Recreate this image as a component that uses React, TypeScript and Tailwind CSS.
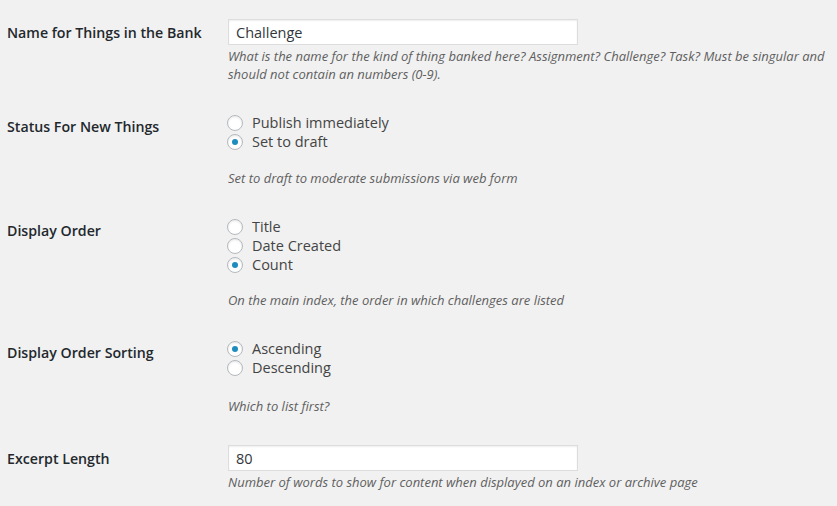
// WordPress-style settings table for the Bank plugin: text fields,
// radio groups and italic helper descriptions on the admin grey.

import { useState } from 'react'

type Option = { value: string; label: string }

function Radio({ checked, label, onChange }: { checked: boolean; label: string; onChange: () => void }) {
  return (
    <label className="flex items-center h-[19px] cursor-pointer" onClick={onChange}>
      <span className="w-4 h-4 rounded-full border border-[#b4b9be] bg-white shadow-[inset_0_1px_2px_rgba(0,0,0,0.1)] flex items-center justify-center flex-shrink-0 ml-[-1px]">
        {checked && <span className="w-[6px] h-[6px] rounded-full bg-[#1e8cbe]" />}
      </span>
      <span className="ml-[9px] text-[14.5px] leading-[19px] text-[#444]">{label}</span>
    </label>
  )
}

function Row({ label, children }: { label: string; children: React.ReactNode }) {
  return (
    <div className="flex">
      <div className="w-[228px] flex-shrink-0 pt-[20px] pl-[7px] text-[14.2px] leading-[18px] font-semibold text-[#23282d]">
        {label}
      </div>
      <div className="flex-1 pt-[15px] pb-[15px] pr-[10px]">{children}</div>
    </div>
  )
}

function RadioGroup({ options, value, onChange }: { options: Option[]; value: string; onChange: (v: string) => void }) {
  return (
    <div className="flex flex-col">
      {options.map(o => (
        <Radio key={o.value} label={o.label} checked={value === o.value} onChange={() => onChange(o.value)} />
      ))}
    </div>
  )
}

function Description({ children, className = '' }: { children: React.ReactNode; className?: string }) {
  return <p className={`text-[13px] leading-[18px] italic text-[#5f5f5f] ${className}`}>{children}</p>
}

export default function App() {
  const [name, setName] = useState('Challenge')
  const [status, setStatus] = useState('draft')
  const [order, setOrder] = useState('count')
  const [sort, setSort] = useState('asc')
  const [excerpt, setExcerpt] = useState('80')

  const inputClass =
    'block w-[350px] h-[26px] px-[7px] bg-white border border-[#ddd] shadow-[inset_0_1px_2px_rgba(0,0,0,0.07)] text-[14.5px] text-[#32373c] outline-none'

  return (
    <div
      className="min-h-screen bg-[#f1f1f1] pt-[4px]"
      style={{ fontFamily: '"Open Sans", "Liberation Sans", sans-serif' }}
    >
      <Row label="Name for Things in the Bank">
        <input className={inputClass} value={name} onChange={e => setName(e.target.value)} />
        <Description className="mt-[2px]">
          What is the name for the kind of thing banked here? Assignment? Challenge? Task? Must be singular and
          should not contain an numbers (0-9).
        </Description>
      </Row>

      <Row label="Status For New Things">
        <RadioGroup
          value={status}
          onChange={setStatus}
          options={[
            { value: 'publish', label: 'Publish immediately' },
            { value: 'draft', label: 'Set to draft' },
          ]}
        />
        <Description className="mt-[18px]">Set to draft to moderate submissions via web form</Description>
      </Row>

      <Row label="Display Order">
        <RadioGroup
          value={order}
          onChange={setOrder}
          options={[
            { value: 'title', label: 'Title' },
            { value: 'date', label: 'Date Created' },
            { value: 'count', label: 'Count' },
          ]}
        />
        <Description className="mt-[17px]">On the main index, the order in which challenges are listed</Description>
      </Row>

      <Row label="Display Order Sorting">
        <RadioGroup
          value={sort}
          onChange={setSort}
          options={[
            { value: 'asc', label: 'Ascending' },
            { value: 'desc', label: 'Descending' },
          ]}
        />
        <Description className="mt-[20px]">Which to list first?</Description>
      </Row>

      <Row label="Excerpt Length">
        <input className={inputClass} value={excerpt} onChange={e => setExcerpt(e.target.value)} />
        <Description className="mt-[2px]">
          Number of words to show for content when displayed on an index or archive page
        </Description>
      </Row>
    </div>
  )
}
